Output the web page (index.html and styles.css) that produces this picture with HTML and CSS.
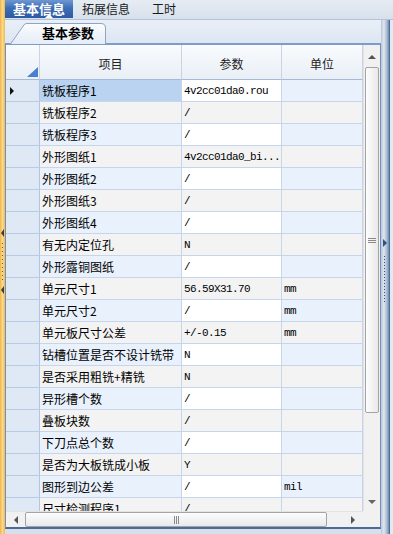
FILE: index.html
```html
<!DOCTYPE html>
<html lang="zh-CN">
<head>
    <meta charset="UTF-8">
    <meta name="viewport" content="width=device-width, initial-scale=1.0">
    <title>基本信息</title>
    <link rel="stylesheet" href="styles.css">
</head>
<body>
    <div class="edge-left">
        <svg width="5" height="66" viewBox="0 0 5 66">
            <polygon points="4,0 4,8 1,4" fill="#3b3b3b"/>
            <g fill="#6a5a30">
                <rect x="2" y="14" width="1" height="1"/><rect x="2" y="18" width="1" height="1"/>
                <rect x="2" y="22" width="1" height="1"/><rect x="2" y="26" width="1" height="1"/>
                <rect x="2" y="30" width="1" height="1"/><rect x="2" y="34" width="1" height="1"/>
                <rect x="2" y="38" width="1" height="1"/><rect x="2" y="42" width="1" height="1"/>
                <rect x="2" y="46" width="1" height="1"/><rect x="2" y="50" width="1" height="1"/>
            </g>
            <polygon points="4,57 4,65 1,61" fill="#3b3b3b"/>
        </svg>
    </div>

    <div class="main">
        <div class="tabbar">
            <div class="tab active">基本信息</div>
            <div class="tab">拓展信息</div>
            <div class="tab">工时</div>
        </div>

        <div class="workspace">
            <div class="panel">
                <div class="subtabs">
                    <div class="subtab">
                        <svg class="subtab-shape" width="96" height="21" viewBox="0 0 96 21">
                            <defs>
                                <linearGradient id="tabfill" x1="0" y1="0" x2="0" y2="1">
                                    <stop offset="0" stop-color="#fbfcfe"/>
                                    <stop offset="1" stop-color="#e4ecf6"/>
                                </linearGradient>
                            </defs>
                            <path d="M0.5,21 L14,1.8 Q15,0.5 17,0.5 L91,0.5 Q95.5,0.5 95.5,5 L95.5,21" fill="url(#tabfill)" stroke="#8ea4c4"/>
                        </svg>
                        <span class="subtab-label">基本参数</span>
                    </div>
                </div>

                <div class="grid">
                    <div class="grid-body">
                        <div class="sheet">
                            <div class="row head">
                                <div class="cell corner"></div>
                                <div class="cell">项目</div>
                                <div class="cell">参数</div>
                                <div class="cell">单位</div>
                            </div>
                            <div class="row odd current">
                                <div class="cell rh"><span class="pointer"></span></div>
                                <div class="cell name">铣板程序1</div>
                                <div class="cell v">4v2cc01da0.rou</div>
                                <div class="cell v"></div>
                            </div>
                            <div class="row even">
                                <div class="cell rh"></div>
                                <div class="cell name">铣板程序2</div>
                                <div class="cell v">/</div>
                                <div class="cell v"></div>
                            </div>
                            <div class="row odd">
                                <div class="cell rh"></div>
                                <div class="cell name">铣板程序3</div>
                                <div class="cell v">/</div>
                                <div class="cell v"></div>
                            </div>
                            <div class="row even">
                                <div class="cell rh"></div>
                                <div class="cell name">外形图纸1</div>
                                <div class="cell v">4v2cc01da0_bi...</div>
                                <div class="cell v"></div>
                            </div>
                            <div class="row odd">
                                <div class="cell rh"></div>
                                <div class="cell name">外形图纸2</div>
                                <div class="cell v">/</div>
                                <div class="cell v"></div>
                            </div>
                            <div class="row even">
                                <div class="cell rh"></div>
                                <div class="cell name">外形图纸3</div>
                                <div class="cell v">/</div>
                                <div class="cell v"></div>
                            </div>
                            <div class="row odd">
                                <div class="cell rh"></div>
                                <div class="cell name">外形图纸4</div>
                                <div class="cell v">/</div>
                                <div class="cell v"></div>
                            </div>
                            <div class="row even">
                                <div class="cell rh"></div>
                                <div class="cell name">有无内定位孔</div>
                                <div class="cell v">N</div>
                                <div class="cell v"></div>
                            </div>
                            <div class="row odd">
                                <div class="cell rh"></div>
                                <div class="cell name">外形露铜图纸</div>
                                <div class="cell v">/</div>
                                <div class="cell v"></div>
                            </div>
                            <div class="row even">
                                <div class="cell rh"></div>
                                <div class="cell name">单元尺寸1</div>
                                <div class="cell v">56.59X31.70</div>
                                <div class="cell v">mm</div>
                            </div>
                            <div class="row odd">
                                <div class="cell rh"></div>
                                <div class="cell name">单元尺寸2</div>
                                <div class="cell v">/</div>
                                <div class="cell v">mm</div>
                            </div>
                            <div class="row even">
                                <div class="cell rh"></div>
                                <div class="cell name">单元板尺寸公差</div>
                                <div class="cell v">+/-0.15</div>
                                <div class="cell v">mm</div>
                            </div>
                            <div class="row odd">
                                <div class="cell rh"></div>
                                <div class="cell name">钻槽位置是否不设计铣带</div>
                                <div class="cell v">N</div>
                                <div class="cell v"></div>
                            </div>
                            <div class="row even">
                                <div class="cell rh"></div>
                                <div class="cell name">是否采用粗铣+精铣</div>
                                <div class="cell v">N</div>
                                <div class="cell v"></div>
                            </div>
                            <div class="row odd">
                                <div class="cell rh"></div>
                                <div class="cell name">异形槽个数</div>
                                <div class="cell v">/</div>
                                <div class="cell v"></div>
                            </div>
                            <div class="row even">
                                <div class="cell rh"></div>
                                <div class="cell name">叠板块数</div>
                                <div class="cell v">/</div>
                                <div class="cell v"></div>
                            </div>
                            <div class="row odd">
                                <div class="cell rh"></div>
                                <div class="cell name">下刀点总个数</div>
                                <div class="cell v">/</div>
                                <div class="cell v"></div>
                            </div>
                            <div class="row even">
                                <div class="cell rh"></div>
                                <div class="cell name">是否为大板铣成小板</div>
                                <div class="cell v">Y</div>
                                <div class="cell v"></div>
                            </div>
                            <div class="row odd">
                                <div class="cell rh"></div>
                                <div class="cell name">图形到边公差</div>
                                <div class="cell v">/</div>
                                <div class="cell v">mil</div>
                            </div>
                            <div class="row even">
                                <div class="cell rh"></div>
                                <div class="cell name">尺寸检测程序1</div>
                                <div class="cell v">/</div>
                                <div class="cell v"></div>
                            </div>
                        </div>

                        <div class="vscroll">
                            <div class="sb-btn"><span class="arrow-up"></span></div>
                            <div class="vthumb"><span class="grip-h"></span></div>
                            <div class="sb-space"></div>
                            <div class="sb-btn down"><span class="arrow-down"></span></div>
                        </div>
                    </div>

                    <div class="hscroll-row">
                        <div class="hscroll">
                            <div class="hb-btn"><span class="arrow-left"></span></div>
                            <div class="hthumb"><span class="grip-v"></span></div>
                            <div class="sb-space"></div>
                            <div class="hb-btn right"><span class="arrow-right"></span></div>
                        </div>
                        <div class="sb-corner"></div>
                    </div>
                </div>
            </div>

            <div class="splitter">
                <span class="arrow-split"></span>
                <span class="split-dots"></span>
            </div>
            <div class="panel-edge"></div>
        </div>
    </div>
</body>
</html>
```

FILE: styles.css
```css
* {
    box-sizing: border-box;
}

body {
    margin: 0;
    width: 393px;
    height: 534px;
    overflow: hidden;
    display: flex;
    font-family: "Noto Sans CJK SC", "Liberation Sans", sans-serif;
    font-size: 12px;
    color: #000;
    background: #d6dfea;
}

/* left splitter */
.edge-left {
    width: 5px;
    padding-top: 229px;
    background: linear-gradient(to right, #eeb54a, #fbd88a 50%, #efbc55);
}

.edge-left svg {
    display: block;
}

.main {
    width: 388px;
    display: flex;
    flex-direction: column;
}

/* top tabs */
.tabbar {
    height: 20px;
    display: flex;
    background: linear-gradient(#e6ecf3, #d7e0eb);
    border-bottom: 1px solid #b3c2d6;
}

.tab {
    padding: 0 13px 0 9px;
    line-height: 18px;
    color: #1a1a1a;
}

.tab.active {
    position: relative;
    width: 68px;
    height: 18px;
    padding: 0;
    text-align: center;
    font-size: 13px;
    font-weight: bold;
    color: #fff;
    background: linear-gradient(#6f98d2, #3d6db5 45%, #2c5aa3);
}

.tab.active::after {
    content: "";
    position: absolute;
    left: 40px;
    bottom: 0;
    border-left: 4px solid transparent;
    border-right: 4px solid transparent;
    border-bottom: 4px solid #fff;
}

.workspace {
    flex: 1;
    display: flex;
}

.panel {
    width: 376px;
    display: flex;
    flex-direction: column;
}

/* second level tab */
.subtabs {
    height: 23px;
    padding-left: 5px;
    background: linear-gradient(#e9eff7, #dce6f2);
}

.subtab {
    position: relative;
    width: 96px;
    height: 21px;
    margin-top: 3px;
    margin-bottom: -1px;
}

.subtab-shape {
    position: absolute;
    left: 0;
    top: 0;
}

.subtab-label {
    position: relative;
    display: block;
    padding-left: 32px;
    line-height: 20px;
    font-size: 13px;
    font-weight: bold;
}

/* grid */
.grid {
    border-top: 2px solid #7e9ccb;
    border-left: 1px solid #6f8fbf;
    border-right: 1px solid #6f8fbf;
    border-bottom: 2px solid #4a6a9e;
    background: #fff;
}

.grid-body {
    display: flex;
    height: 466px;
}

.sheet {
    width: 357px;
    overflow: hidden;
}

.row {
    display: grid;
    grid-template-columns: 34px 142px 100px 81px;
    height: 22px;
}

.cell {
    border-right: 1px solid #c6d5ea;
    border-bottom: 1px solid #c6d5ea;
    display: flex;
    align-items: center;
    padding-left: 2px;
    white-space: nowrap;
    overflow: hidden;
}

.row.head {
    height: 35px;
}

.row.head .cell {
    justify-content: center;
    padding: 3px 0 0;
    background: linear-gradient(#f9fbfd, #e9eff6);
    border-right-color: #c8d4e4;
    border-bottom-color: #a6bad6;
    color: #222;
}

.cell.corner {
    position: relative;
}

.cell.corner::after {
    content: "";
    position: absolute;
    right: 1px;
    bottom: 2px;
    border-style: solid;
    border-width: 0 0 10px 11px;
    border-color: transparent transparent #4a7fcf transparent;
}

.cell.rh {
    background: #dfe8f5;
    border-right-color: #b3c6e1;
    border-bottom-color: #b9cbe3;
    padding-left: 4px;
}

.pointer {
    width: 0;
    height: 0;
    border-top: 4px solid transparent;
    border-bottom: 4px solid transparent;
    border-left: 4px solid #111;
}

.cell.v {
    font-family: "Liberation Mono", "DejaVu Sans Mono", monospace;
    font-size: 11px;
    letter-spacing: -0.6px;
}

.row.odd .cell {
    background: #e9f1fc;
}

.row.odd .cell.v:nth-child(3) {
    background: #fff;
}

.row.even .cell {
    background: #f3f3f3;
}

.row.odd .cell.rh,
.row.even .cell.rh {
    background: #dfe8f5;
}

.row.current .cell.name {
    background: #b9d3f1;
}

/* scrollbars */
.vscroll {
    width: 17px;
    display: flex;
    flex-direction: column;
    background: #f1f1f1;
    border-left: 1px solid #e2e2e2;
}

.sb-btn {
    height: 22px;
    display: flex;
    justify-content: center;
    padding-top: 10px;
}

.sb-btn.down {
    height: 19px;
    padding-top: 8px;
}

.sb-space {
    flex: 1;
}

.arrow-up {
    width: 0;
    height: 0;
    border-left: 4px solid transparent;
    border-right: 4px solid transparent;
    border-bottom: 4px solid #555;
}

.arrow-down {
    width: 0;
    height: 0;
    border-left: 4px solid transparent;
    border-right: 4px solid transparent;
    border-top: 4px solid #666;
}

.vthumb {
    height: 346px;
    margin: 0 1px 0 1px;
    border: 1px solid #a4a4a4;
    border-radius: 2px;
    background: linear-gradient(to right, #fdfdfd, #e9e9e9);
    display: flex;
    align-items: center;
    justify-content: center;
}

.grip-h {
    width: 8px;
    height: 5px;
    border-top: 1px solid #8a8a8a;
    border-bottom: 1px solid #8a8a8a;
    background: linear-gradient(transparent 1px, #8a8a8a 1px, #8a8a8a 2px, transparent 2px);
}

.hscroll-row {
    display: flex;
    height: 16px;
}

.hscroll {
    width: 357px;
    display: flex;
    background: #f1f1f1;
    border-top: 1px solid #e2e2e2;
}

.hb-btn {
    width: 19px;
    display: flex;
    align-items: center;
    justify-content: center;
}

.hb-btn.right {
    width: 20px;
}

.arrow-left {
    width: 0;
    height: 0;
    border-top: 4px solid transparent;
    border-bottom: 4px solid transparent;
    border-right: 4px solid #555;
}

.arrow-right {
    width: 0;
    height: 0;
    border-top: 4px solid transparent;
    border-bottom: 4px solid transparent;
    border-left: 4px solid #555;
}

.hthumb {
    width: 302px;
    margin-bottom: 0;
    border: 1px solid #a4a4a4;
    border-radius: 2px;
    background: linear-gradient(#fdfdfd, #e9e9e9);
    display: flex;
    align-items: center;
    justify-content: center;
}

.grip-v {
    width: 5px;
    height: 8px;
    border-left: 1px solid #8a8a8a;
    border-right: 1px solid #8a8a8a;
    background: linear-gradient(to right, transparent 1px, #8a8a8a 1px, #8a8a8a 2px, transparent 2px);
}

.sb-corner {
    width: 17px;
    background: #f1f1f1;
}

/* right splitter */
.splitter {
    width: 9px;
    display: flex;
    flex-direction: column;
    align-items: center;
    padding-top: 219px;
    background: linear-gradient(to right, #b9c7d9, #dfe6ef 35%, #a9bad0 75%, #6d86ab);
    border-right: 1px solid #4e6c9c;
}

.arrow-split {
    width: 0;
    height: 0;
    margin-left: -1px;
    border-top: 4px solid transparent;
    border-bottom: 4px solid transparent;
    border-left: 4px solid #33507e;
}

.split-dots {
    width: 1px;
    height: 48px;
    margin-top: 9px;
    margin-left: -1px;
    background: repeating-linear-gradient(#33507e 0 1px, transparent 1px 3px);
}

.panel-edge {
    width: 3px;
    background: #e3e9f2;
}
```
